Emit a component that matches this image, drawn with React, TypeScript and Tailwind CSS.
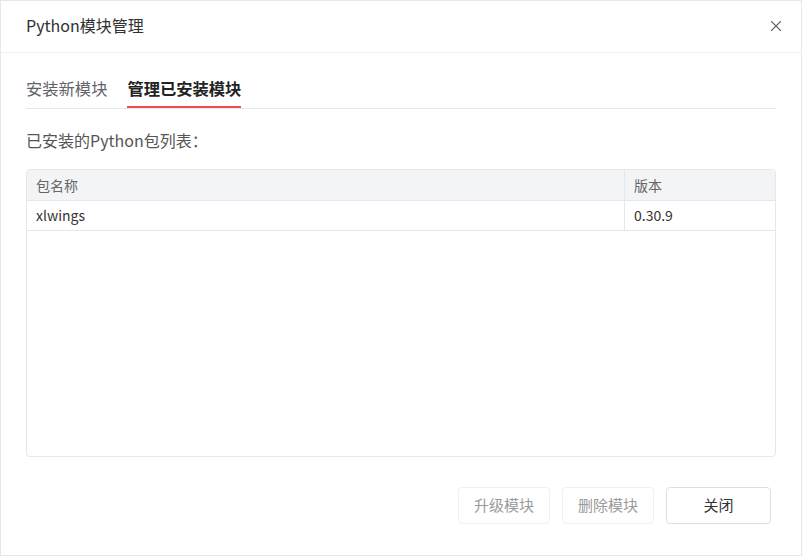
import { X } from "lucide-react";

const packages = [{ name: "xlwings", version: "0.30.9" }];

export default function App() {
  return (
    <div
      className="w-[802px] h-[556px] bg-white border border-[#e4e7ed] flex flex-col text-[#303133]"
      style={{ fontFamily: '"Noto Sans CJK SC", "Noto Sans", sans-serif' }}
    >
      {/* Header */}
      <div className="h-[52px] shrink-0 flex items-center justify-between pl-[25px] pr-[14px] pb-[3px] border-b border-[#ebeef5]">
        <span className="text-[16px]">Python模块管理</span>
        <button className="text-[#666] p-[2px] mt-[2px]">
          <X size={18} strokeWidth={1.5} />
        </button>
      </div>

      <div className="flex-1 flex flex-col px-[25px]">
        {/* Tabs */}
        <div className="mt-[20px] flex gap-[20px] border-b border-[#e4e7ed]">
          <div className="h-[35px] pb-[3px] flex items-center text-[16.3px] text-[#5f6368] border-b-2 border-transparent">
            安装新模块
          </div>
          <div className="h-[35px] pb-[3px] flex items-center text-[16.3px] font-bold text-[#222] border-b-2 border-[#f04c4c]">
            管理已安装模块
          </div>
        </div>

        <div className="mt-[21px] h-[20px] leading-[20px] text-[16px] text-[#555]">
          已安装的Python包列表：
        </div>

        {/* Table */}
        <div className="mt-[19px] h-[288px] border border-[#e4e7ed] rounded-[4px] overflow-hidden text-[14px]">
          <div className="flex h-[31px] bg-[#f3f4f6] border-b border-[#e4e7ed] text-[#666]">
            <div className="flex-1 flex items-center px-[9px] border-r border-[#e4e7ed]">包名称</div>
            <div className="w-[150px] flex items-center px-[9px]">版本</div>
          </div>
          {packages.map((p) => (
            <div key={p.name} className="flex h-[30px] border-b border-[#e4e7ed] text-[#333]">
              <div className="flex-1 flex items-center px-[9px] border-r border-[#e4e7ed]">{p.name}</div>
              <div className="w-[150px] flex items-center px-[9px]">{p.version}</div>
            </div>
          ))}
        </div>

        {/* Footer */}
        <div className="mt-[30px] flex justify-end gap-[12px] pr-[5px]">
          <button
            disabled
            className="w-[92px] h-[37px] rounded-[4px] border border-[#eef0f3] text-[15px] text-[#9a9a9a] bg-white"
          >
            升级模块
          </button>
          <button
            disabled
            className="w-[92px] h-[37px] rounded-[4px] border border-[#eef0f3] text-[15px] text-[#9a9a9a] bg-white"
          >
            删除模块
          </button>
          <button className="w-[105px] h-[37px] rounded-[4px] border border-[#dcdfe6] text-[15px] text-[#333] bg-white">
            关闭
          </button>
        </div>
      </div>
    </div>
  );
}
